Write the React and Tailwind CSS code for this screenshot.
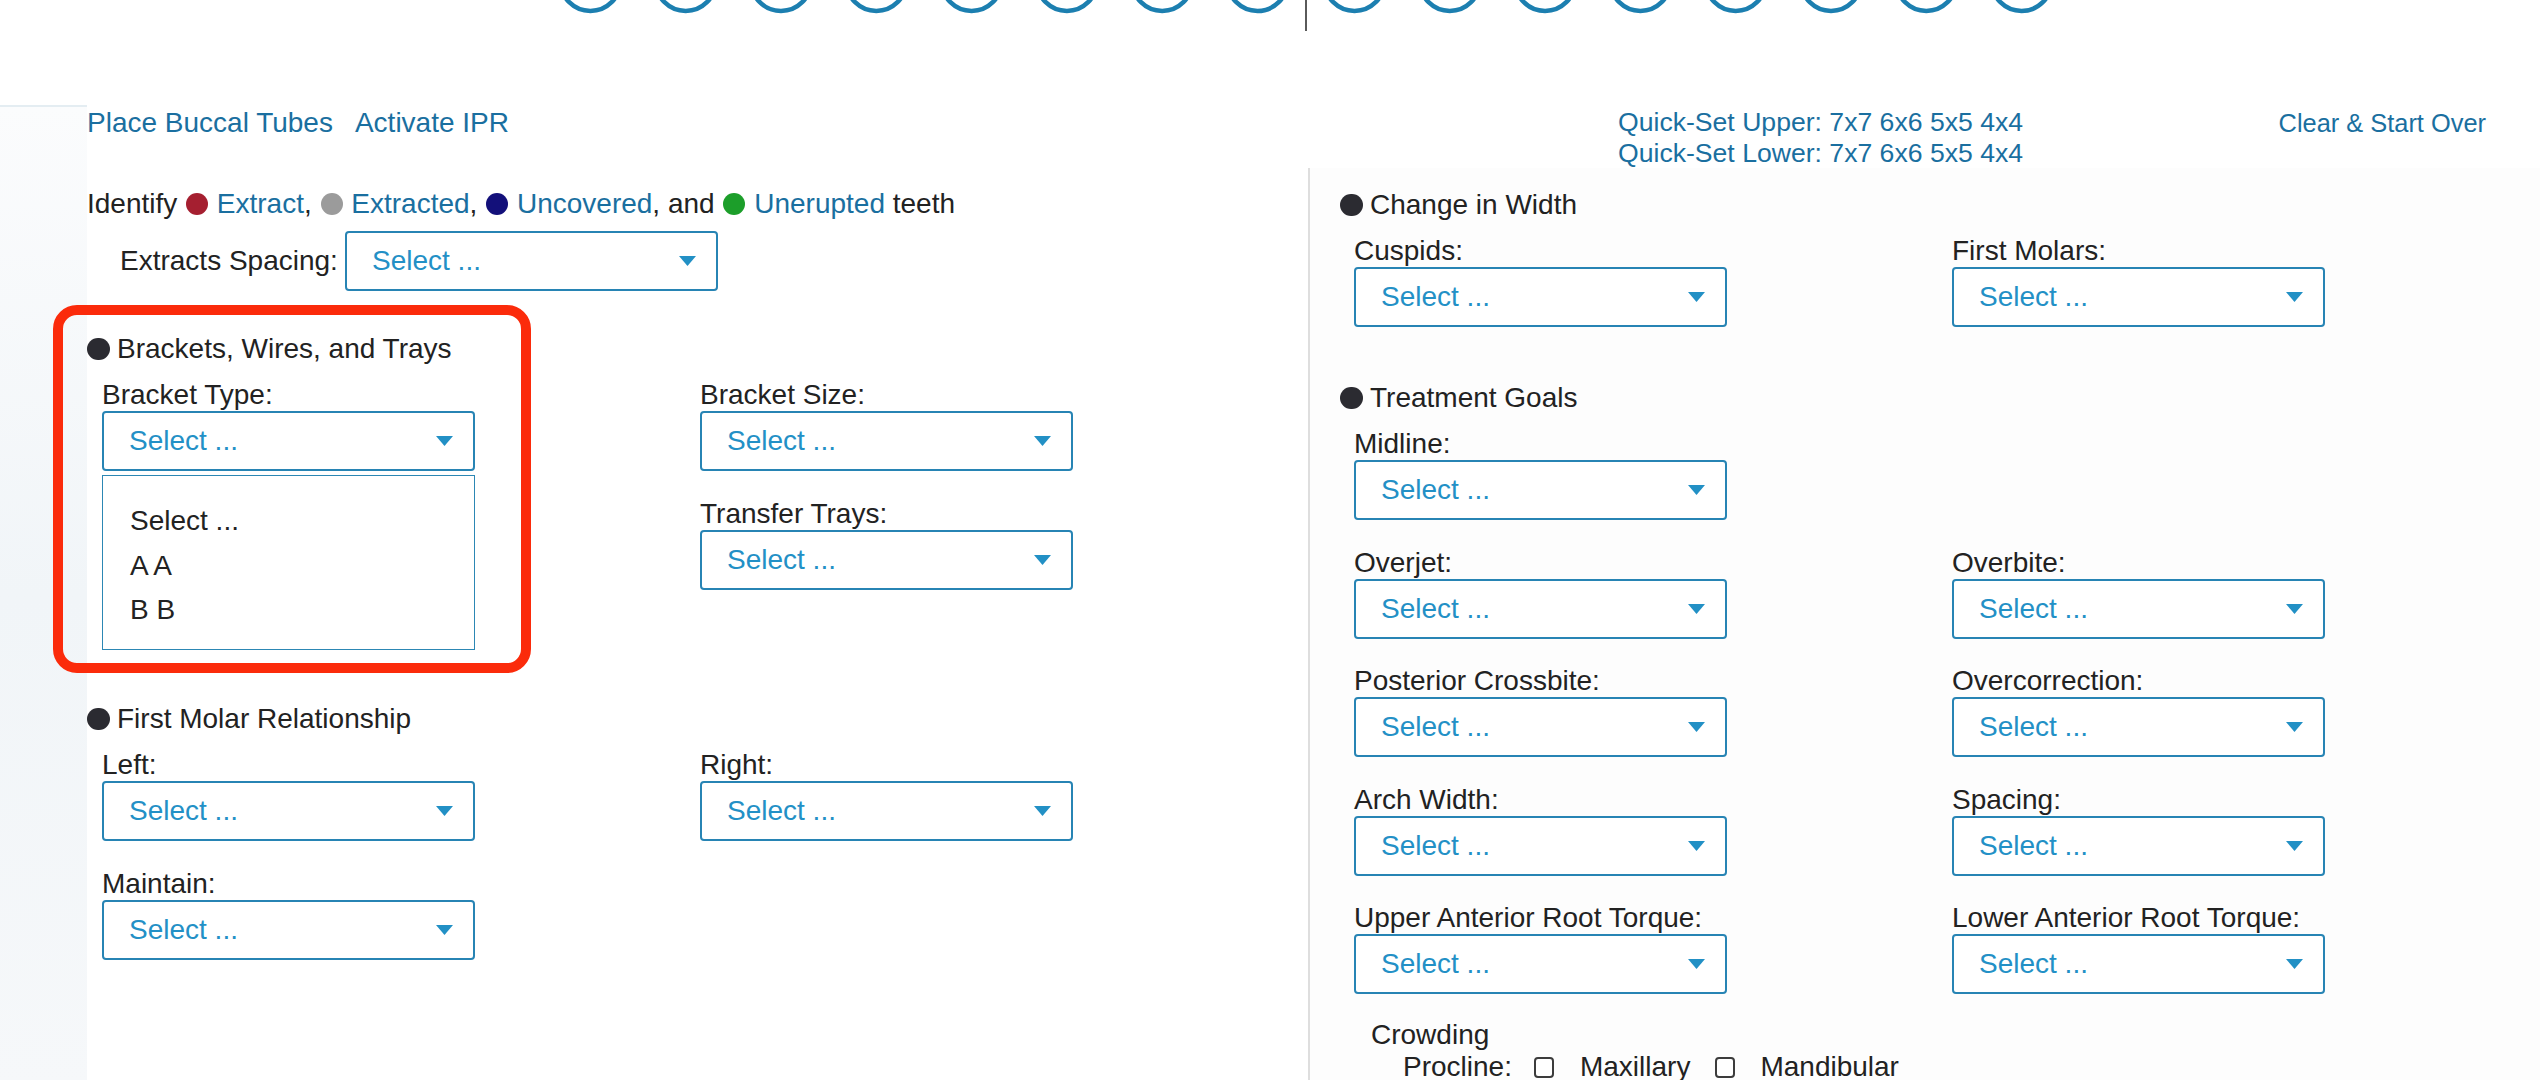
import React from "react";

function Arrow() {
  return (
    <svg width="17" height="10" viewBox="0 0 17 10" className="shrink-0">
      <polygon points="0,0 17,0 8.5,10" fill="#2290c5" />
    </svg>
  );
}

function Select() {
  return (
    <div className="flex h-[60px] w-[373px] items-center justify-between rounded-[4px] border-2 border-[#2784b4] bg-white pl-[25px] pr-[20px] text-[#2390c6]">
      <span>Select ...</span>
      <Arrow />
    </div>
  );
}

function Field({ label, children }) {
  return (
    <div className="relative flex flex-col">
      <div className="h-[32px] whitespace-nowrap">{label}</div>
      <Select />
      {children}
    </div>
  );
}

function Heading({ children }) {
  return (
    <div className="flex h-[32px] items-center">
      <span className="mr-[7px] h-[22px] w-[23px] shrink-0 rounded-full bg-[#2b2b31]" />
      <span>{children}</span>
    </div>
  );
}

function Dot({ className }) {
  return (
    <span
      className={
        "mx-[1px] inline-block h-[22px] w-[22px] rounded-full align-[-2px] " + className
      }
    />
  );
}

function Checkbox() {
  return (
    <span className="inline-block h-[21px] w-[20px] shrink-0 rounded-[4px] border-2 border-[#3c3c3c] bg-white" />
  );
}

function TopTeeth() {
  const left = [];
  const right = [];
  for (let k = 0; k < 8; k++) {
    left.push(1257.5 - 95.3 * k);
    right.push(1354.5 + 95.3 * k);
  }
  const xs = [...left, ...right];
  return (
    <svg width="2540" height="32" viewBox="0 0 2540 32" className="block">
      {xs.map((x, i) => (
        <circle
          key={i}
          cx={x}
          cy={-19}
          r={30}
          fill="none"
          stroke="#1c7fb0"
          strokeWidth="4.5"
        />
      ))}
      <line x1="1306" y1="0" x2="1306" y2="31" stroke="#5a5a5a" strokeWidth="2" />
    </svg>
  );
}

export default function App() {
  return (
    <div className="relative h-[1080px] w-[2540px] overflow-hidden bg-white font-['Liberation_Sans',Arial,sans-serif] text-[28px] leading-[32px] text-[#222]">
      <TopTeeth />
      <div className="mt-[73px] flex">
        <div className="w-[87px] shrink-0 border-t-2 border-[#e4edf2] bg-linear-to-b from-[#fbfcfd] via-[#f1f5f8] to-[#f6f8fa]" />
        <div className="flex flex-1 flex-col">
          {/* header */}
          <div className="flex h-[63px] pt-[2px]">
            <div className="flex w-[1531px] shrink-0 gap-[22px] text-[#1a6fa0]">
              <span>Place Buccal Tubes</span>
              <span>Activate IPR</span>
            </div>
            <div className="flex flex-1 flex-col text-[26.6px] leading-[31px] text-[#1a6fa0]">
              <span>Quick-Set Upper: 7x7 6x6 5x5 4x4</span>
              <span>Quick-Set Lower: 7x7 6x6 5x5 4x4</span>
            </div>
            <div className="pr-[54px] text-[25.4px] text-[#1a6fa0]">Clear &amp; Start Over</div>
          </div>

          {/* body */}
          <div className="flex">
            {/* left column */}
            <div className="w-[1221px] shrink-0 pt-[20px]">
              <div className="whitespace-nowrap">
                Identify <Dot className="bg-[#a51f30]" />{" "}
                <span className="text-[#1a6fa0]">Extract</span>,{" "}
                <Dot className="bg-[#9b9b9b]" />{" "}
                <span className="text-[#1a6fa0]">Extracted</span>,{" "}
                <Dot className="bg-[#13107a]" />{" "}
                <span className="text-[#1a6fa0]">Uncovered</span>, and{" "}
                <Dot className="bg-[#1c9e2a]" />{" "}
                <span className="text-[#1a6fa0]">Unerupted</span> teeth
              </div>
              <div className="ml-[33px] mt-[11px] flex items-center">
                <span className="w-[225px] shrink-0 whitespace-nowrap">Extracts Spacing:</span>
                <Select />
              </div>

              <div className="mt-[42px]">
                <Heading>Brackets, Wires, and Trays</Heading>
              </div>
              <div className="mt-[14px] grid grid-cols-[598px_373px] gap-y-[27px] pl-[15px]">
                <Field label="Bracket Type:">
                  <div className="absolute left-0 top-[96px] z-10 h-[175px] w-[373px] border-[1.5px] border-[#2c87b4] bg-white pl-[27px] pt-[23px] leading-[44.5px] text-[#222]">
                    <div>Select ...</div>
                    <div>A A</div>
                    <div>B B</div>
                  </div>
                </Field>
                <Field label="Bracket Size:" />
                <div />
                <Field label="Transfer Trays:" />
              </div>

              <div className="mt-[113px]">
                <Heading>First Molar Relationship</Heading>
              </div>
              <div className="mt-[14px] grid grid-cols-[598px_373px] gap-y-[27px] pl-[15px]">
                <Field label="Left:" />
                <Field label="Right:" />
                <Field label="Maintain:" />
              </div>
            </div>

            {/* right column */}
            <div className="flex-1 border-l-2 border-[#dedede] bg-[#fdfdfd] pl-[30px] pt-[21px]">
              <Heading>Change in Width</Heading>
              <div className="mt-[14px] grid grid-cols-[598px_373px] gap-y-[26.5px] pl-[14px]">
                <Field label="Cuspids:" />
                <Field label="First Molars:" />
              </div>

              <div className="mt-[55px]">
                <Heading>Treatment Goals</Heading>
              </div>
              <div className="mt-[14px] grid grid-cols-[598px_373px] gap-y-[26.5px] pl-[14px]">
                <Field label="Midline:" />
                <div />
                <Field label="Overjet:" />
                <Field label="Overbite:" />
                <Field label="Posterior Crossbite:" />
                <Field label="Overcorrection:" />
                <Field label="Arch Width:" />
                <Field label="Spacing:" />
                <Field label="Upper Anterior Root Torque:" />
                <Field label="Lower Anterior Root Torque:" />
              </div>

              <div className="mt-[25px] pl-[31px]">Crowding</div>
              <div className="flex items-center pl-[63px]">
                <span>Procline:</span>
                <span className="ml-[22px] flex items-center">
                  <Checkbox />
                </span>
                <span className="ml-[26px]">Maxillary</span>
                <span className="ml-[25px] flex items-center">
                  <Checkbox />
                </span>
                <span className="ml-[25px]">Mandibular</span>
              </div>
            </div>
          </div>
        </div>
      </div>

      {/* annotation highlight */}
      <div className="pointer-events-none absolute left-[53px] top-[305px] z-20 h-[368px] w-[478px] rounded-[24px] border-[10px] border-[#fb2b0b]" />
    </div>
  );
}
